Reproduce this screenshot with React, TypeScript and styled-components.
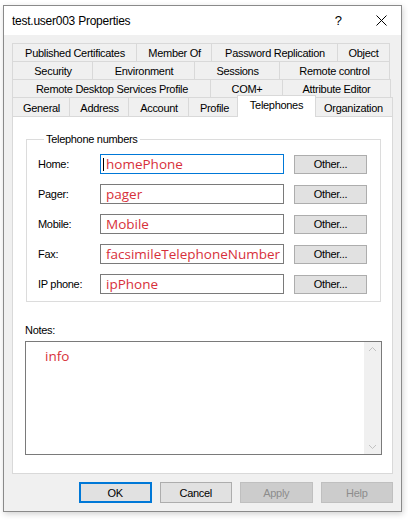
import React from "react";
import styled, { createGlobalStyle } from "styled-components";

const Global = createGlobalStyle`
  html, body { margin: 0; padding: 0; background: #ffffff; }
  body { font-family: "Liberation Sans", Arial, sans-serif; }
`;

const Page = styled.div`
  width: 408px;
  height: 520px;
  padding: 5px 0 0 3px;
  box-sizing: border-box;
  background: #ffffff;
`;

const Window = styled.div`
  width: 399px;
  height: 507px;
  box-sizing: border-box;
  border: 1px solid #8a8a8a;
  background: #f0f0f0;
  box-shadow: 1px 2px 6px rgba(0, 0, 0, 0.18);
  display: flex;
  flex-direction: column;
`;

const TitleBar = styled.div`
  height: 29px;
  background: #ffffff;
  display: flex;
  align-items: center;
  padding-left: 8px;
  padding-right: 14px;
`;

const Title = styled.div`
  flex: 1;
  font-family: "Liberation Sans", Arial, sans-serif;
  font-size: 12px;
  letter-spacing: -0.25px;
  color: #000;
  padding-top: 1px;
`;

const Help = styled.div`
  font-family: "Liberation Sans", Arial, sans-serif;
  font-size: 13px;
  color: #000;
  margin-right: 34px;
`;

const Body = styled.div`
  flex: 1;
  padding: 8px 8px 8px 8px;
  display: flex;
  flex-direction: column;
  font-size: 11px;
  letter-spacing: -0.3px;
`;

const TabRow = styled.div<{ $last?: boolean }>`
  display: flex;
  height: ${(p) => (p.$last ? 19 : 18)}px;
  width: 381px;
`;

const Tab = styled.div<{ $w: number }>`
  box-sizing: border-box;
  width: ${(p) => p.$w}px;
  border-top: 1px solid #d9d9d9;
  border-left: 1px solid #d9d9d9;
  margin-right: -1px;
  &:last-child { border-right: 1px solid #d9d9d9; margin-right: 0; }
  background: #f0f0f0;
  color: #000;
  display: flex;
  align-items: center;
  justify-content: center;
  white-space: nowrap;
  padding-top: 1px;
`;

const SelectedTab = styled.div<{ $w: number }>`
  box-sizing: border-box;
  width: ${(p) => p.$w + 4}px;
  margin: -2px -2px -1px -2px;
  height: 22px;
  border: 1px solid #d9d9d9;
  border-bottom: none;
  background: #ffffff;
  position: relative;
  z-index: 2;
  display: flex;
  align-items: flex-start;
  justify-content: center;
  padding-top: 3px;
  white-space: nowrap;
`;

const Panel = styled.div`
  width: 381px;
  height: 358px;
  box-sizing: border-box;
  border: 1px solid #d9d9d9;
  background: #ffffff;
  padding: 16px 11px 0 12px;
  display: flex;
  flex-direction: column;
`;

const Group = styled.fieldset`
  margin: 0 0 0 1px;
  padding: 8px 0 7px 11px;
  border: 1px solid #dcdcdc;
  display: flex;
  flex-direction: column;
  gap: 10px;
  min-width: 0;
`;

const Legend = styled.legend`
  padding: 0 2px;
  margin-left: 6px;
  line-height: 13px;
  color: #000;
`;

const FieldRow = styled.div`
  display: flex;
  align-items: center;
  height: 20px;
`;

const Label = styled.div`
  width: 62px;
  color: #000;
`;

const TextBox = styled.div<{ $focused?: boolean }>`
  box-sizing: border-box;
  width: 184px;
  height: 20px;
  border: 1px solid ${(p) => (p.$focused ? "#0078d7" : "#7a7a7a")};
  background: #fff;
  display: flex;
  align-items: center;
  padding-left: 5px;
  font-family: "Open Sans", "Noto Sans", sans-serif;
  font-size: 13.5px;
  letter-spacing: 0;
  color: #d7303a;
  white-space: nowrap;
  overflow: hidden;
`;

const Caret = styled.span`
  display: inline-block;
  width: 1px;
  height: 13px;
  background: #000;
  margin-left: -3px;
  margin-right: 2px;
`;

const Button = styled.div<{ $h?: number; $default?: boolean; $disabled?: boolean }>`
  box-sizing: border-box;
  width: 73px;
  height: ${(p) => p.$h ?? 19}px;
  background: ${(p) => (p.$disabled ? "#cccccc" : "#e1e1e1")};
  border: ${(p) =>
    p.$default ? "2px solid #0078d7" : p.$disabled ? "1px solid #bfbfbf" : "1px solid #adadad"};
  color: ${(p) => (p.$disabled ? "#8c8c8c" : "#000")};
  display: flex;
  align-items: center;
  justify-content: center;
`;

const OtherButton = styled(Button)`
  margin-left: 10px;
`;

const NotesLabel = styled.div`
  color: #000;
  margin-top: 22px;
  line-height: 13px;
`;

const NotesBox = styled.div`
  box-sizing: border-box;
  margin-top: 4px;
  width: 357px;
  height: 114px;
  border: 1px solid #7a7a7a;
  background: #fff;
  display: flex;
`;

const NotesText = styled.div`
  flex: 1;
  padding: 5px 0 0 19px;
  font-family: "Open Sans", "Noto Sans", sans-serif;
  font-size: 13.5px;
  letter-spacing: 0;
  color: #d7303a;
`;

const ScrollBar = styled.div`
  width: 17px;
  background: #f0f0f0;
  display: flex;
  flex-direction: column;
  justify-content: space-between;
  align-items: center;
  padding: 4px 0;
`;

const Footer = styled.div`
  display: flex;
  gap: 8px;
  margin-top: 8px;
  padding-left: 67px;
`;

const tabRows: { label: string; w: number }[][] = [
  [
    { label: "Published Certificates", w: 125 },
    { label: "Member Of", w: 76 },
    { label: "Password Replication", w: 127 },
    { label: "Object", w: 53 },
  ],
  [
    { label: "Security", w: 81 },
    { label: "Environment", w: 103 },
    { label: "Sessions", w: 86 },
    { label: "Remote control", w: 111 },
  ],
  [
    { label: "Remote Desktop Services Profile", w: 199 },
    { label: "COM+", w: 73 },
    { label: "Attribute Editor", w: 109 },
  ],
];

const lastRow = [
  { label: "General", w: 58 },
  { label: "Address", w: 60 },
  { label: "Account", w: 61 },
  { label: "Profile", w: 52 },
  { label: "Telephones", w: 75, selected: true },
  { label: "Organization", w: 79 },
];

const fields = [
  { label: "Home:", value: "homePhone", focused: true },
  { label: "Pager:", value: "pager" },
  { label: "Mobile:", value: "Mobile" },
  { label: "Fax:", value: "facsimileTelephoneNumber" },
  { label: "IP phone:", value: "ipPhone" },
];

const Chevron = ({ up }: { up?: boolean }) => (
  <svg width="9" height="6" viewBox="0 0 9 6">
    <polyline
      points={up ? "1,5 4.5,1.5 8,5" : "1,1 4.5,4.5 8,1"}
      fill="none"
      stroke="#c2c2c2"
      strokeWidth="1"
    />
  </svg>
);

const CloseIcon = () => (
  <svg width="11" height="11" viewBox="0 0 11 11">
    <path d="M0.5 0.5 L10.5 10.5 M10.5 0.5 L0.5 10.5" stroke="#000" strokeWidth="1" />
  </svg>
);

export default function App() {
  return (
    <Page>
      <Global />
      <Window>
        <TitleBar>
          <Title>test.user003 Properties</Title>
          <Help>?</Help>
          <CloseIcon />
        </TitleBar>
        <Body>
          {tabRows.map((row, i) => (
            <TabRow key={i}>
              {row.map((t) => (
                <Tab key={t.label} $w={t.w}>
                  {t.label}
                </Tab>
              ))}
            </TabRow>
          ))}
          <TabRow $last>
            {lastRow.map((t) =>
              t.selected ? (
                <SelectedTab key={t.label} $w={t.w}>
                  {t.label}
                </SelectedTab>
              ) : (
                <Tab key={t.label} $w={t.w}>
                  {t.label}
                </Tab>
              )
            )}
          </TabRow>
          <Panel>
            <Group>
              <Legend>Telephone numbers</Legend>
              {fields.map((f) => (
                <FieldRow key={f.label}>
                  <Label>{f.label}</Label>
                  <TextBox $focused={f.focused}>
                    {f.focused && <Caret />}
                    {f.value}
                  </TextBox>
                  <OtherButton>Other...</OtherButton>
                </FieldRow>
              ))}
            </Group>
            <NotesLabel>Notes:</NotesLabel>
            <NotesBox>
              <NotesText>info</NotesText>
              <ScrollBar>
                <Chevron up />
                <Chevron />
              </ScrollBar>
            </NotesBox>
          </Panel>
          <Footer>
            <Button $h={21} $default>
              OK
            </Button>
            <Button $h={21}>Cancel</Button>
            <Button $h={21} $disabled>
              Apply
            </Button>
            <Button $h={21} $disabled>
              Help
            </Button>
          </Footer>
        </Body>
      </Window>
    </Page>
  );
}
